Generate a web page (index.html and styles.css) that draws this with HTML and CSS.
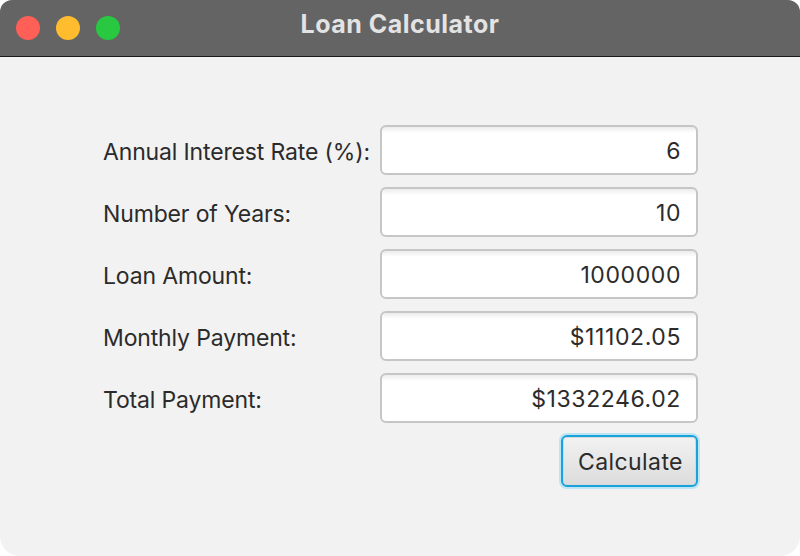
FILE: index.html
```html
<!DOCTYPE html>
<html>
<head>
<meta charset="utf-8">
<link rel="stylesheet" href="styles.css">
</head>
<body>
<div class="window">
  <div class="titlebar">
    <div class="lights">
      <span class="light red"></span>
      <span class="light yellow"></span>
      <span class="light green"></span>
    </div>
    <div class="title">Loan Calculator</div>
  </div>
  <div class="content">
    <div class="form">
      <label class="label">Annual Interest Rate (%):</label>
      <div class="field">6</div>
      <label class="label">Number of Years:</label>
      <div class="field">10</div>
      <label class="label">Loan Amount:</label>
      <div class="field">1000000</div>
      <label class="label">Monthly Payment:</label>
      <div class="field">$11102.05</div>
      <label class="label">Total Payment:</label>
      <div class="field">$1332246.02</div>
      <div></div>
      <div class="actions"><button class="btn">Calculate</button></div>
    </div>
  </div>
</div>
</body>
</html>
```
FILE: styles.css
```css
html, body {
  margin: 0;
  padding: 0;
  background: #ffffff;
}
body {
  width: 800px;
  height: 556px;
  overflow: hidden;
  font-family: Inter, "Noto Sans", sans-serif;
}
.window {
  width: 800px;
  height: 556px;
  border-radius: 12px 12px 20px 20px;
  overflow: hidden;
  background: #f2f2f2;
  display: flex;
  flex-direction: column;
}
.titlebar {
  height: 56px;
  background: #646464;
  border-bottom: 1px solid #1a1a1a;
  position: relative;
  display: flex;
  align-items: center;
  justify-content: center;
  flex-shrink: 0;
}
.lights {
  position: absolute;
  left: 16px;
  top: 16px;
  display: flex;
  gap: 16px;
}
.light {
  width: 24px;
  height: 24px;
  border-radius: 50%;
  display: block;
}
.red { background: #fe5f57; }
.yellow { background: #febc2e; }
.green { background: #28c840; }
.title {
  color: #e3e3e3;
  font-weight: 700;
  font-size: 25px;
  letter-spacing: 0.5px;
  margin-top: -8px;
}
.content {
  flex: 1;
  padding: 68px 0 0 103px;
}
.form {
  display: grid;
  grid-template-columns: 277px 318px;
  row-gap: 12px;
  align-items: center;
}
.label {
  font-size: 23px;
  color: #2b2b2b;
  letter-spacing: -0.15px;
  padding-top: 3px;
}
.field {
  height: 50px;
  box-sizing: border-box;
  border: 2px solid #c6c6c6;
  border-radius: 6px;
  background: linear-gradient(#ececec 0px, #ffffff 6px, #ffffff);
  text-align: right;
  padding-right: 15px;
  font-size: 23px;
  letter-spacing: 0.6px;
  color: #2b2b2b;
  line-height: 49px;
}
.actions {
  display: flex;
  justify-content: flex-end;
}
.btn {
  width: 137px;
  height: 52px;
  box-sizing: border-box;
  border: 2px solid #17a3dc;
  border-radius: 6px;
  box-shadow: 0 0 0 2px #bfe4f3, inset 0 0 0 1px #d8d8d8;
  background: linear-gradient(#f2f2f2, #dcdcdc);
  font-family: Inter, "Noto Sans", sans-serif;
  font-size: 23px;
  letter-spacing: 0.4px;
  color: #2b2b2b;
  padding: 2px 0 0 2px;
}
```
